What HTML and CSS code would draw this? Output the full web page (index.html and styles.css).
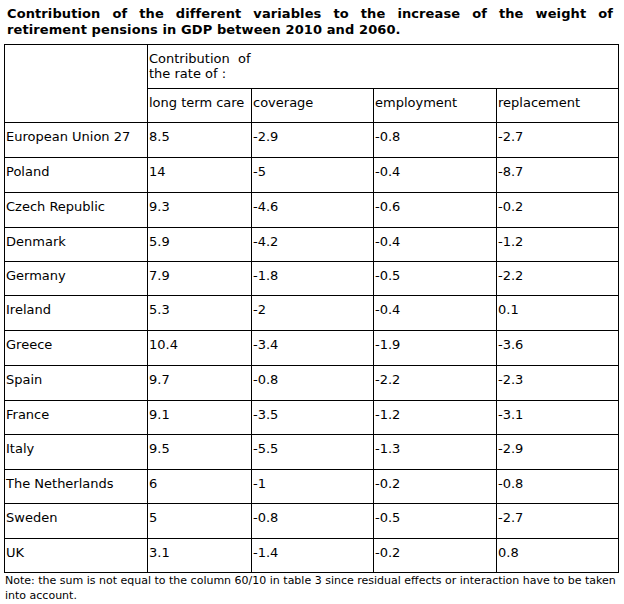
FILE: index.html
```html
<!DOCTYPE html>
<html>
<head>
<meta charset="utf-8">
<link rel="stylesheet" href="styles.css">
</head>
<body>
<div class="page">
<p class="title">Contribution of the different variables to the increase of the weight of retirement pensions in GDP between 2010 and 2060.</p>
<table class="data">
<colgroup>
<col class="c0"><col class="c1"><col class="c2"><col class="c3"><col class="c4">
</colgroup>
<tr class="h1"><td rowspan="2"></td><td colspan="4" class="hd">Contribution&nbsp; of<br>the rate of :</td></tr>
<tr class="h2"><td>long term care</td><td>coverage</td><td>employment</td><td>replacement</td></tr>
<tr class="r35"><td>European Union 27</td><td>8.5</td><td>-2.9</td><td>-0.8</td><td>-2.7</td></tr>
<tr class="r35"><td>Poland</td><td>14</td><td>-5</td><td>-0.4</td><td>-8.7</td></tr>
<tr class="r35"><td>Czech Republic</td><td>9.3</td><td>-4.6</td><td>-0.6</td><td>-0.2</td></tr>
<tr class="r34"><td>Denmark</td><td>5.9</td><td>-4.2</td><td>-0.4</td><td>-1.2</td></tr>
<tr class="r34"><td>Germany</td><td>7.9</td><td>-1.8</td><td>-0.5</td><td>-2.2</td></tr>
<tr class="r35"><td>Ireland</td><td>5.3</td><td>-2</td><td>-0.4</td><td>0.1</td></tr>
<tr class="r35"><td>Greece</td><td>10.4</td><td>-3.4</td><td>-1.9</td><td>-3.6</td></tr>
<tr class="r35"><td>Spain</td><td>9.7</td><td>-0.8</td><td>-2.2</td><td>-2.3</td></tr>
<tr class="r34"><td>France</td><td>9.1</td><td>-3.5</td><td>-1.2</td><td>-3.1</td></tr>
<tr class="r35"><td>Italy</td><td>9.5</td><td>-5.5</td><td>-1.3</td><td>-2.9</td></tr>
<tr class="r34"><td>The Netherlands</td><td>6</td><td>-1</td><td>-0.2</td><td>-0.8</td></tr>
<tr class="r35"><td>Sweden</td><td>5</td><td>-0.8</td><td>-0.5</td><td>-2.7</td></tr>
<tr class="r34"><td>UK</td><td>3.1</td><td>-1.4</td><td>-0.2</td><td>0.8</td></tr>
</table>
<p class="note">Note: the sum is not equal to the column 60/10 in table 3 since residual effects or interaction have to be taken into account.</p>
</div>
</body>
</html>
```
FILE: styles.css
```css
html, body {
  margin: 0;
  padding: 0;
  background: #fff;
}
.page {
  width: 624px;
  padding-top: 6px;
  font-family: "DejaVu Sans", Verdana, sans-serif;
  color: #000;
}
.title {
  margin: 0 11px 6px 7px;
  font-weight: bold;
  font-size: 13px;
  line-height: 16px;
  letter-spacing: 0.1px;
  text-align: justify;
}
.data {
  margin-left: 4px;
  width: 614px;
  border-collapse: collapse;
  table-layout: fixed;
  font-size: 13px;
  line-height: 15px;
}
.c0 { width: 143px; }
.c1 { width: 104px; }
.c2 { width: 122px; }
.c3 { width: 123px; }
.c4 { width: 122px; }
.data td {
  border: 1px solid #000;
  padding: 0 0 7px 1px;
  vertical-align: middle;
  white-space: nowrap;
  overflow: hidden;
}
.data .hd {
  padding-bottom: 1px;
}
.h1 { height: 44px; }
.h2 { height: 34px; }
.r35 { height: 35px; }
.r34 { height: 34px; }
.note {
  margin: 0 8px 0 5px;
  font-family: "DejaVu Sans", sans-serif;
  font-size: 11px;
  line-height: 15px;
}
```
